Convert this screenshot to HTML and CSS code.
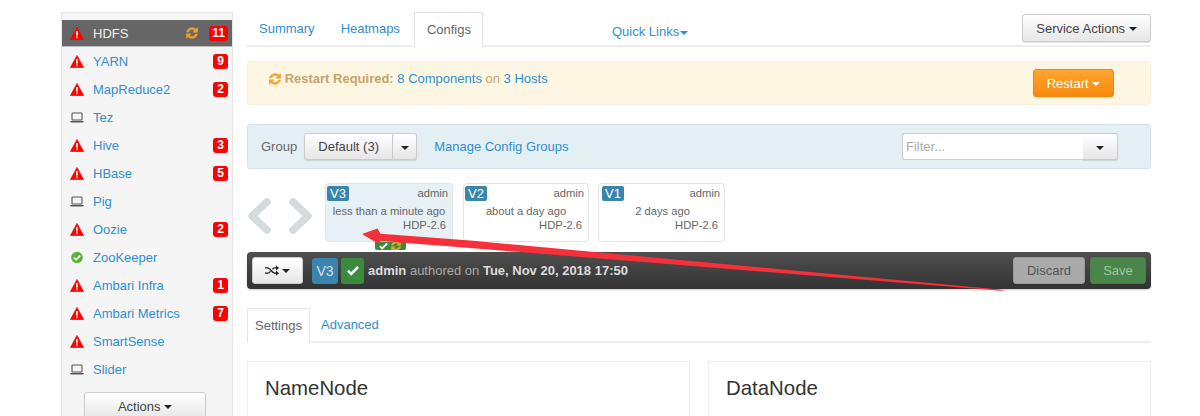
FILE: index.html
```html
<!DOCTYPE html>
<html>
<head>
	<title>Ambari - HDFS Configs</title>
	<link rel="stylesheet" href="styles.css">
</head>
<body>
	<svg width="0" height="0" class="defs">
		<symbol id="warn" viewBox="0 0 14 13"><path d="M7 .3 13.8 12.7H.2Z" fill="#f00" stroke="#f00" stroke-linejoin="round" stroke-width=".5"/><rect x="6.2" y="4" width="1.6" height="4.6" fill="#fff"/><rect x="6.2" y="9.5" width="1.6" height="1.6" fill="#fff"/></symbol>
		<symbol id="laptop" viewBox="0 0 14 12"><rect x="2" y="1.5" width="10" height="7" rx=".8" fill="none" stroke="#555" stroke-width="1.1"/><path d="M.3 9.6h13.4v.6l-.8.8H1.1l-.8-.8Z" fill="#555"/></symbol>
		<symbol id="sync" viewBox="1 1 12 12"><path d="M1.5 6A5.7 5.7 0 0 1 11 3.2L12.6 1.6V6.2H8L9.7 4.5A3.8 3.8 0 0 0 3.5 6ZM12.5 8A5.7 5.7 0 0 1 3 10.8L1.4 12.4V7.8H6L4.3 9.5A3.8 3.8 0 0 0 10.5 8Z" fill="currentColor" stroke="currentColor" stroke-width=".6"/></symbol>
		<symbol id="check" viewBox="0 0 14 12"><path d="M1.5 6.2 5 9.7 12.5 2.2" fill="none" stroke="currentColor" stroke-width="2.8"/></symbol>
		<symbol id="okcircle" viewBox="0 0 14 14"><circle cx="7" cy="7" r="6.2" fill="#5cb531"/><path d="M3.7 7.2 6 9.5 10.4 5" fill="none" stroke="#fff" stroke-width="1.9"/></symbol>
	</svg>

	<div class="page">
		<aside class="sidebar">
			<ul class="services">
				<li class="service active"><svg class="ico"><use href="#warn"/></svg><a>HDFS</a><svg class="sync-ico"><use href="#sync"/></svg><span class="badge">11</span></li>
				<li class="service"><svg class="ico"><use href="#warn"/></svg><a>YARN</a><span class="badge">9</span></li>
				<li class="service"><svg class="ico"><use href="#warn"/></svg><a>MapReduce2</a><span class="badge">2</span></li>
				<li class="service"><svg class="ico"><use href="#laptop"/></svg><a>Tez</a></li>
				<li class="service"><svg class="ico"><use href="#warn"/></svg><a>Hive</a><span class="badge">3</span></li>
				<li class="service"><svg class="ico"><use href="#warn"/></svg><a>HBase</a><span class="badge">5</span></li>
				<li class="service"><svg class="ico"><use href="#laptop"/></svg><a>Pig</a></li>
				<li class="service"><svg class="ico"><use href="#warn"/></svg><a>Oozie</a><span class="badge">2</span></li>
				<li class="service"><svg class="ico"><use href="#okcircle"/></svg><a>ZooKeeper</a></li>
				<li class="service"><svg class="ico"><use href="#warn"/></svg><a>Ambari Infra</a><span class="badge">1</span></li>
				<li class="service"><svg class="ico"><use href="#warn"/></svg><a>Ambari Metrics</a><span class="badge">7</span></li>
				<li class="service"><svg class="ico"><use href="#warn"/></svg><a>SmartSense</a></li>
				<li class="service"><svg class="ico"><use href="#laptop"/></svg><a>Slider</a></li>
			</ul>
			<button class="btn actions">Actions <span class="caret"></span></button>
		</aside>

		<main class="content">
			<div class="topnav">
				<a class="tab">Summary</a>
				<a class="tab">Heatmaps</a>
				<a class="tab current">Configs</a>
				<a class="quick-links">Quick Links<span class="caret blue"></span></a>
				<button class="btn service-actions">Service Actions <span class="caret"></span></button>
			</div>

			<div class="restart-bar">
				<p class="restart-text"><svg class="restart-ico"><use href="#sync"/></svg> <b>Restart Required:</b> <a>8 Components</a> on <a>3 Hosts</a></p>
				<button class="btn restart">Restart <span class="caret white"></span></button>
			</div>

			<div class="group-bar">
				<span class="group-label">Group</span>
				<div class="btn-group">
					<button class="btn group-name">Default (3)</button>
					<button class="btn group-caret"><span class="caret"></span></button>
				</div>
				<a class="manage">Manage Config Groups</a>
				<div class="filter">
					<input class="filter-input" placeholder="Filter...">
					<button class="btn filter-caret"><span class="caret"></span></button>
				</div>
			</div>

			<div class="versions">
				<svg class="chevrons" width="65" height="36" viewBox="0 0 65 36"><path d="M20 4 5 18 20 32M46 4 61 18 46 32" fill="none" stroke="#d3dbdf" stroke-width="7.5" stroke-linejoin="round" stroke-linecap="round"/></svg>
				<div class="version selected">
					<div class="version-top"><span class="vlabel">V3</span><span>admin</span></div>
					<div class="version-when">less than a minute ago</div>
					<div class="version-stack">HDP-2.6</div>
					<span class="version-state"><svg class="state-check"><use href="#check"/></svg><svg class="state-sync"><use href="#sync"/></svg></span>
				</div>
				<div class="version second">
					<div class="version-top"><span class="vlabel">V2</span><span>admin</span></div>
					<div class="version-when">about a day ago</div>
					<div class="version-stack">HDP-2.6</div>
				</div>
				<div class="version third">
					<div class="version-top"><span class="vlabel">V1</span><span>admin</span></div>
					<div class="version-when">2 days ago</div>
					<div class="version-stack">HDP-2.6</div>
				</div>
			</div>

			<div class="version-bar">
				<button class="btn compare"><svg class="shuffle" viewBox="0 0 16 12"><path d="M0 3h3c3 0 5 6 8 6h2M0 9h3c1.3 0 2.3-1 3.2-2M8.500 4.500C9.300 3.700 10 3 11 3h2" fill="none" stroke="#222" stroke-width="1.7"/><path d="M12.500 0 16 3l-3.500 3ZM12.500 6 16 9l-3.500 3Z" fill="#222"/></svg><span class="caret"></span></button>
				<span class="cur-label">V3</span>
				<span class="cur-check"><svg class="cur-check-ico"><use href="#check"/></svg></span>
				<span class="authored"><b>admin</b> authored on <b>Tue, Nov 20, 2018 17:50</b></span>
				<button class="btn discard">Discard</button>
				<button class="btn save">Save</button>
			</div>

			<div class="subtabs">
				<a class="subtab current">Settings</a>
				<a class="subtab">Advanced</a>
			</div>

			<div class="panels">
				<section class="panel"><h2>NameNode</h2></section>
				<section class="panel"><h2>DataNode</h2></section>
			</div>
		</main>
	</div>

	<!-- red annotation arrow drawn over the screenshot -->
	<svg class="annotation" width="1200" height="416" viewBox="0 0 1200 416"><path d="M362 234 377.500 228.500 380.500 233.800 470 240.500 1000 289.500 1006 290.500 998 290.500 470 248 381 241 377 243Z" fill="#f5303a"/></svg>
</body>
</html>
```

FILE: styles.css
```css
*{
	box-sizing: border-box;
}

html, body{
	height: 100%;
}

body{
	margin: 0;
	overflow: hidden;
	font-family: "Liberation Sans", Arial, sans-serif;
	font-size: 13px;
	color: #666;
	background: #fff;
}

a{
	color: #2f8fd0;
}

.defs{
	position: absolute;
}

.page{
	display: flex;
	height: 100%;
	overflow: hidden;
	padding-left: 61px;
	gap: 14px;
}

.btn{
	font: inherit;
	color: #444;
	border: 1px solid #ccc;
	border-radius: 3px;
	background-image: linear-gradient(#fff, #e6e6e6);
	box-shadow: 0 1px 1px rgba(0,0,0,.12);
	padding: 0;
}

.caret{
	display: inline-block;
	width: 0;
	height: 0;
	vertical-align: middle;
	border-top: 4px solid #222;
	border-left: 4px solid transparent;
	border-right: 4px solid transparent;
}

.caret.blue{
	border-top-color: #2f8fd0;
}

.caret.white{
	border-top-color: #fff;
}

/* sidebar */

.sidebar{
	width: 172px;
	margin-top: 12px;
	padding-top: 7px;
	overflow: hidden;
	background: #f5f5f5;
	border: 1px solid #e6e6e6;
	border-bottom: 0;
	flex: none;
}

.services{
	list-style: none;
	margin: 0;
	padding: 0;
}

.service{
	display: flex;
	align-items: center;
	height: 28px;
	padding: 0 4px 0 8px;
}

.service a{
	flex: 1;
	margin-left: 9px;
}

.service.active{
	background: #666;
	height: 27px;
	border-bottom: 1px solid #bbb;
}

.service.active a{
	color: #eee;
}

.ico{
	width: 14px;
	height: 13px;
	flex: none;
}

.sync-ico{
	width: 12px;
	height: 12px;
	color: #f0a030;
	margin-right: 11px;
}

.badge{
	background: #f00;
	color: #fff;
	font-size: 12px;
	font-weight: bold;
	line-height: 15px;
	height: 15px;
	padding: 0 3px;
	border-radius: 3px;
	min-width: 15px;
	text-align: center;
}

.actions{
	display: block;
	width: 122px;
	height: 28px;
	margin: 9px 0 0 22px;
}

/* main column */

.content{
	width: 904px;
	flex: none;
}

.topnav{
	display: flex;
	align-items: flex-start;
	margin-top: 12px;
	height: 35px;
	border-bottom: 2px solid #eee;
}

.tab{
	height: 35px;
	line-height: 33px;
	padding: 0 12px;
	margin-right: 2px;
}

.tab.current{
	color: #666;
	margin-right: 0;
	background: #fff;
	padding: 0 11px 0 12px;
	border: 1px solid #e2e2e2;
	border-bottom: 0;
}

.quick-links{
	margin: 12px 0 0 129px;
}

.quick-links .caret{
	margin-left: 1px;
}

.service-actions{
	margin: 2px 0 0 auto;
	width: 129px;
	height: 28px;
}

.restart-bar{
	display: flex;
	justify-content: space-between;
	margin-top: 14px;
	height: 44px;
	padding: 7px 36px 0 21px;
	background: #fdf6e3;
	border: 1px solid #faf0da;
	border-radius: 3px;
	color: #c9a468;
}

.restart-text{
	margin: 2px 0 0;
	line-height: 16px;
}

.restart-ico{
	width: 12px;
	height: 12px;
	color: #f4a338;
	vertical-align: -2px;
}

.restart{
	width: 81px;
	height: 28px;
	color: #fff;
	background-image: linear-gradient(#ffa530, #f58a0c);
	border-color: #e88a12;
}

.group-bar{
	display: flex;
	align-items: center;
	margin-top: 19px;
	height: 45px;
	padding: 0 32px 0 13px;
	background: #e4eff4;
	border: 1px solid #d6e3ea;
	border-radius: 3px;
}

.group-label{
	margin-right: 7px;
}

.btn-group, .filter{
	display: flex;
}

.group-name{
	width: 89px;
	height: 27px;
	border-radius: 3px 0 0 3px;
}

.group-caret, .filter-caret{
	width: 24px;
	height: 27px;
	border-left: 0;
	border-radius: 0 3px 3px 0;
}

.filter-caret{
	width: 35px;
}

.manage{
	margin-left: 17px;
}

.filter{
	margin-left: auto;
}

.filter-input{
	font: inherit;
	width: 181px;
	height: 27px;
	padding: 0 3px;
	border: 1px solid #ccc;
	border-right: 0;
	border-radius: 3px 0 0 3px;
	outline: 0;
}

.filter-input::placeholder{
	color: #aaa;
}

/* version cards */

.versions{
	display: flex;
	align-items: flex-start;
	margin-top: 14px;
	height: 60px;
	font-size: 11.2px;
}

.chevrons{
	margin: 15px 13px 0 0;
	flex: none;
}

.version{
	position: relative;
	width: 126px;
	height: 59px;
	padding: 2px 4px 0 1px;
	background: #fff;
	border: 1px solid #dfe5e9;
	border-radius: 4px;
	margin-right: 9px;
	text-align: center;
	white-space: nowrap;
}

.version.selected{
	width: 128px;
	margin-right: 10px;
	background: #e6f0f5;
}

.version.third{
	width: 127px;
	padding-left: 3px;
}

.version-top{
	display: flex;
	justify-content: space-between;
	align-items: flex-start;
	height: 18px;
	line-height: 15px;
}

.vlabel{
	background: #3a85ad;
	color: #fff;
	font-size: 13px;
	line-height: 15px;
	height: 15px;
	width: 22px;
	border-radius: 2px;
}

.version-when{
	line-height: 15px;
	padding-left: 3px;
}

.version-stack{
	line-height: 15px;
	margin-top: -1px;
	text-align: right;
	padding-right: 2px;
}

.version-state{
	position: absolute;
	top: 100%;
	left: 49px;
	display: flex;
	align-items: center;
	gap: 2px;
	width: 31px;
	height: 8px;
	padding-left: 3px;
	margin-top: 1px;
	overflow: hidden;
	background: #3c8a3c;
	border-radius: 0 0 2px 2px;
}

.state-check{
	width: 11px;
	height: 8px;
	color: #fff;
}

.state-sync{
	width: 10px;
	height: 10px;
	color: #f0a030;
}

.version-bar{
	display: flex;
	align-items: center;
	margin-top: 9px;
	height: 37px;
	padding: 0 5px;
	background-image: linear-gradient(#4f4f4f, #333);
	border-radius: 4px;
	box-shadow: 0 1px 2px rgba(0,0,0,.2);
}

.compare{
	display: flex;
	align-items: center;
	justify-content: center;
	gap: 3px;
	width: 51px;
	height: 27px;
}

.shuffle{
	width: 14px;
	height: 11px;
}

.cur-label{
	width: 26px;
	height: 26px;
	margin-left: 9px;
	background: #3a85ad;
	color: #dde;
	font-size: 14px;
	line-height: 26px;
	text-align: center;
	border-radius: 3px;
}

.cur-check{
	display: flex;
	align-items: center;
	justify-content: center;
	width: 23px;
	height: 26px;
	margin-left: 3px;
	background: #3c8a3c;
	border-radius: 3px;
}

.cur-check-ico{
	width: 14px;
	height: 11px;
	color: #fff;
}

.authored{
	margin-left: 4px;
	color: #aaa;
}

.authored b{
	color: #ddd;
}

.discard{
	margin-left: auto;
	width: 72px;
	height: 27px;
	background: #aaa;
	border-color: #999;
	color: #555;
}

.save{
	margin-left: 5px;
	width: 56px;
	height: 27px;
	background: #4a8549;
	border-color: #477f46;
	color: #a5c5a4;
}

.subtabs{
	display: flex;
	margin-top: 19px;
	height: 35px;
	border-bottom: 2px solid #eee;
}

.subtab{
	height: 35px;
	line-height: 33px;
	padding: 0 11px;
}

.subtab.current{
	color: #666;
	background: #fff;
	width: 63px;
	padding: 0 7px;
	border: 1px solid #e8e8e8;
	border-width: 1px 1px 0;
}

.panels{
	display: flex;
	gap: 18px;
	margin-top: 18px;
}

.panel{
	flex: 1;
	height: 55px;
	border: 1px solid #eee;
	border-bottom: 0;
	padding: 14px 17px 0;
}

.panel h2{
	margin: 0;
	font-size: 20.4px;
	font-weight: normal;
	line-height: 24px;
	color: #333;
}

.annotation{
	position: absolute;
	top: 0;
	left: 0;
	pointer-events: none;
}
```
